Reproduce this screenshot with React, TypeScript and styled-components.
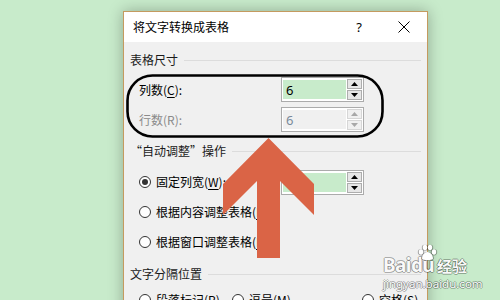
import React from "react";
import styled, { createGlobalStyle } from "styled-components";

const Global = createGlobalStyle`
  html, body { margin: 0; padding: 0; }
  body { background: #C8EBCB; width: 500px; height: 300px; overflow: hidden; }
`;

const Page = styled.div`
  position: relative;
  width: 500px;
  height: 300px;
  overflow: hidden;
  box-sizing: border-box;
  padding: 11px 0 0 123px;
  background: #C8EBCB;
  font-family: "Noto Sans CJK SC", "Noto Sans", sans-serif;
`;

const Dialog = styled.div`
  width: 305px;
  height: 330px;
  box-sizing: border-box;
  border: 1px solid #C49A5F;
  background: #F0F0F0;
  box-shadow: 0 0 14px rgba(0, 0, 0, 0.28);
  display: flex;
  flex-direction: column;
`;

const TitleBar = styled.div`
  height: 30px;
  flex: none;
  background: #fff;
  display: flex;
  align-items: center;
  padding-left: 9px;
  font-size: 12px;
  line-height: 14px;
  color: #000;
`;

const TitleText = styled.span`
  flex: 1;
`;

const TitleButton = styled.div<{ $last?: boolean }>`
  width: 30px;
  height: 30px;
  display: flex;
  align-items: center;
  justify-content: center;
  font-family: "Noto Sans", sans-serif;
  font-size: 13px;
  color: #000;
  margin-right: ${(p) => (p.$last ? "8px" : "15px")};
`;

const Content = styled.div`
  display: flex;
  flex-direction: column;
  padding: 8px 6px 0 6px;
`;

const SectionHeader = styled.div<{ $mt?: number }>`
  height: 20px;
  display: flex;
  align-items: center;
  gap: 6px;
  font-size: 12px;
  line-height: 14px;
  color: #1a1a1a;
  margin-top: ${(p) => p.$mt ?? 0}px;
  &::after {
    content: "";
    flex: 1;
    height: 1px;
    background: #DCDCDC;
  }
`;

const FieldRow = styled.div<{ $mt: number }>`
  height: 25px;
  display: flex;
  align-items: center;
  padding-left: 9px;
  margin-top: ${(p) => p.$mt}px;
`;

const FieldLabel = styled.span<{ $disabled?: boolean }>`
  width: 142px;
  font-size: 12px;
  line-height: 14px;
  color: ${(p) => (p.$disabled ? "#8A8A8A" : "#000")};
`;

const U = styled.span`
  text-decoration: underline;
  text-underline-offset: 2px;
`;

const SpinBox = styled.div`
  width: 83px;
  height: 25px;
  box-sizing: border-box;
  border: 1px solid #ABABAB;
  background: #fff;
  padding: 2px 1px;
  gap: 1px;
  display: flex;
`;

const SpinField = styled.div<{ $disabled?: boolean }>`
  flex: 1;
  background: ${(p) => (p.$disabled ? "#F0F0F0" : "#C8EBCB")};
  color: ${(p) => (p.$disabled ? "#7A8A9A" : "#000")};
  font-family: "Noto Sans", sans-serif;
  font-size: 13px;
  display: flex;
  align-items: center;
  padding-left: 3px;
`;

const SpinButtons = styled.div`
  width: 15px;
  display: flex;
  flex-direction: column;
  gap: 1px;
  margin-top: -1px;
  margin-bottom: -1px;
`;

const SpinBtn = styled.div<{ $disabled?: boolean }>`
  flex: 1;
  box-sizing: border-box;
  border: 1px solid ${(p) => (p.$disabled ? "#D6D6D6" : "#ADADAD")};
  background: ${(p) => (p.$disabled ? "#F0F0F0" : "#E6E6E6")};
  display: flex;
  align-items: center;
  justify-content: center;
`;

const RadioRow = styled.div<{ $mt?: number }>`
  height: 30px;
  display: flex;
  align-items: center;
  padding-left: 9px;
  margin-top: ${(p) => p.$mt ?? 0}px;
`;

const RadioItem = styled.div<{ $w?: number }>`
  display: flex;
  align-items: center;
  gap: 5px;
  width: ${(p) => (p.$w ? `${p.$w}px` : "auto")};
  font-size: 12px;
  line-height: 14px;
  color: #000;
  white-space: nowrap;
`;

const RadioCircle = styled.span<{ $checked?: boolean }>`
  width: 12px;
  height: 12px;
  box-sizing: border-box;
  border-radius: 50%;
  border: 1px solid #333;
  background: #fff;
  display: flex;
  align-items: center;
  justify-content: center;
  flex: none;
  &::after {
    content: "";
    width: 6px;
    height: 6px;
    border-radius: 50%;
    background: ${(p) => (p.$checked ? "#333" : "transparent")};
  }
`;

const Overlay = styled.svg`
  position: absolute;
  left: 0;
  top: 0;
  width: 500px;
  height: 300px;
  pointer-events: none;
`;

const Watermark = styled.div`
  position: absolute;
  left: 383px;
  top: 247px;
  display: flex;
  flex-direction: column;
  color: rgba(255, 255, 255, 0.97);
  text-shadow: 1px 0 0 rgba(0, 0, 0, 0.3), -1px 0 0 rgba(0, 0, 0, 0.3),
    0 1px 0 rgba(0, 0, 0, 0.3), 0 -1px 0 rgba(0, 0, 0, 0.3);
  pointer-events: none;
`;

const WmTop = styled.div`
  display: flex;
  align-items: flex-end;
  height: 29px;
`;

const WmLogo = styled.span`
  position: relative;
  font-family: "Noto Sans", sans-serif;
  font-weight: 700;
  font-size: 19px;
  line-height: 22px;
  letter-spacing: -0.6px;
`;

const Paw = styled.svg`
  position: absolute;
  left: 34px;
  top: -10px;
  width: 20px;
  height: 17px;
  filter: drop-shadow(1px 0 0 rgba(0, 0, 0, 0.28)) drop-shadow(-1px 0 0 rgba(0, 0, 0, 0.28))
    drop-shadow(0 1px 0 rgba(0, 0, 0, 0.2));
`;

const WmCn = styled.span`
  font-family: "Noto Sans CJK SC", sans-serif;
  font-weight: 700;
  font-size: 15px;
  line-height: 20px;
  margin-left: 3px;
`;

const WmUrl = styled.div`
  font-family: "Noto Sans", sans-serif;
  font-size: 11.5px;
  line-height: 14px;
  margin-top: 1px;
`;

const Arrow = ({ disabled, down }: { disabled?: boolean; down?: boolean }) => (
  <svg width="7" height="4" viewBox="0 0 7 4">
    <polygon
      points={down ? "0,0 7,0 3.5,4" : "3.5,0 7,4 0,4"}
      fill={disabled ? "#A8A8A8" : "#000"}
    />
  </svg>
);

const Spin = ({ value, disabled }: { value?: string; disabled?: boolean }) => (
  <SpinBox>
    <SpinField $disabled={disabled}>{value}</SpinField>
    <SpinButtons>
      <SpinBtn $disabled={disabled}>
        <Arrow disabled={disabled} />
      </SpinBtn>
      <SpinBtn $disabled={disabled}>
        <Arrow disabled={disabled} down />
      </SpinBtn>
    </SpinButtons>
  </SpinBox>
);

export default function App() {
  return (
    <Page>
      <Global />
      <Dialog>
        <TitleBar>
          <TitleText>将文字转换成表格</TitleText>
          <TitleButton>?</TitleButton>
          <TitleButton $last>
            <svg width="12" height="12" viewBox="0 0 12 12">
              <path d="M0.5 0.5 L11.5 11.5 M11.5 0.5 L0.5 11.5" stroke="#000" strokeWidth="1" />
            </svg>
          </TitleButton>
        </TitleBar>
        <Content>
          <SectionHeader>表格尺寸</SectionHeader>
          <FieldRow $mt={7}>
            <FieldLabel>
              列数(<U>C</U>):
            </FieldLabel>
            <Spin value="6" />
          </FieldRow>
          <FieldRow $mt={5}>
            <FieldLabel $disabled>行数(R):</FieldLabel>
            <Spin value="6" disabled />
          </FieldRow>
          <SectionHeader $mt={9}>“自动调整”操作</SectionHeader>
          <RadioRow $mt={6}>
            <RadioItem $w={142}>
              <RadioCircle $checked />
              <span>
                固定列宽(<U>W</U>):
              </span>
            </RadioItem>
            <Spin />
          </RadioRow>
          <RadioRow>
            <RadioItem>
              <RadioCircle />
              <span>
                根据内容调整表格(<U>F</U>)
              </span>
            </RadioItem>
          </RadioRow>
          <RadioRow>
            <RadioItem>
              <RadioCircle />
              <span>
                根据窗口调整表格(<U>D</U>)
              </span>
            </RadioItem>
          </RadioRow>
          <SectionHeader $mt={7}>文字分隔位置</SectionHeader>
          <RadioRow $mt={1}>
            <RadioItem $w={93}>
              <RadioCircle />
              <span>
                段落标记(<U>P</U>)
              </span>
            </RadioItem>
            <RadioItem $w={130}>
              <RadioCircle />
              <span>
                逗号(<U>M</U>)
              </span>
            </RadioItem>
            <RadioItem>
              <RadioCircle />
              <span>
                空格(<U>S</U>)
              </span>
            </RadioItem>
          </RadioRow>
        </Content>
      </Dialog>

      <Overlay viewBox="0 0 500 300">
        <rect x="127.5" y="75.5" width="255" height="61" rx="25" ry="25" fill="none" stroke="#000" strokeWidth="2.6" />
        <polygon
          points="268.5,138 314,184 314,215 280,181 280,258 257,258 257,181 223,215 223,184"
          fill="#DA6446"
        />
      </Overlay>

      <Watermark>
        <WmTop>
          <WmLogo>
            Baidu
            <Paw viewBox="0 0 20 17">
              <ellipse cx="4" cy="8" rx="2.2" ry="2.8" fill="#fff" />
              <ellipse cx="8" cy="3.5" rx="2.2" ry="2.8" fill="#fff" />
              <ellipse cx="13" cy="3.5" rx="2.2" ry="2.8" fill="#fff" />
              <ellipse cx="17" cy="8" rx="2.2" ry="2.8" fill="#fff" />
              <path d="M10.5 8 C7 8 5 12 5 14.5 C5 16.5 16 16.5 16 14.5 C16 12 14 8 10.5 8 Z" fill="#fff" />
            </Paw>
          </WmLogo>
          <WmCn>经验</WmCn>
        </WmTop>
        <WmUrl>jingyan.baidu.com</WmUrl>
      </Watermark>
    </Page>
  );
}
